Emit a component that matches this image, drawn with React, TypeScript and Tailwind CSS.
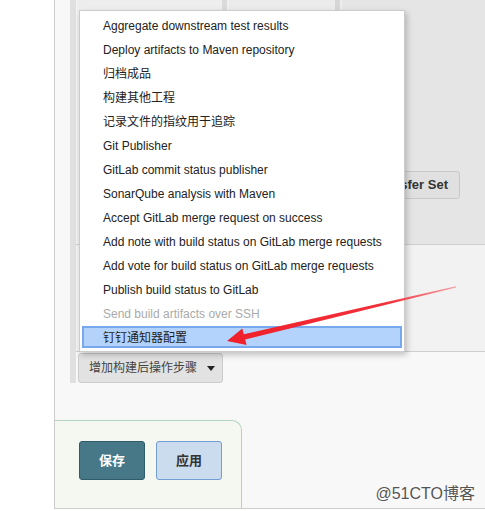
import React from "react";

const items: { label: string; disabled?: boolean; active?: boolean }[] = [
  { label: "Aggregate downstream test results" },
  { label: "Deploy artifacts to Maven repository" },
  { label: "归档成品" },
  { label: "构建其他工程" },
  { label: "记录文件的指纹用于追踪" },
  { label: "Git Publisher" },
  { label: "GitLab commit status publisher" },
  { label: "SonarQube analysis with Maven" },
  { label: "Accept GitLab merge request on success" },
  { label: "Add note with build status on GitLab merge requests" },
  { label: "Add vote for build status on GitLab merge requests" },
  { label: "Publish build status to GitLab" },
  { label: "Send build artifacts over SSH", disabled: true },
  { label: "钉钉通知器配置", active: true },
];

const font = "font-['Liberation_Sans','Noto_Sans_CJK_SC',sans-serif]";

export default function App() {
  return (
    <div className={`relative w-[485px] h-[511px] bg-white overflow-hidden flex ${font}`}>
      <div className="w-[54px] shrink-0 bg-white" />
      <div className="flex-1 h-[509px] border-l border-b border-[#cccccc] bg-[#f8f8f8] flex flex-col">
        {/* post-build section */}
        <div className="pl-[15px]">
          <div className="border-l-[6px] border-[#e0e0e0] h-[383px] flex flex-col">
            {/* block A */}
            <div className="h-[245px] border-b border-[#cfcfcf] flex bg-[#f2f2f2]">
              <div className="w-px bg-[#f3f3f3]" />
              <div className="w-[145px] bg-[#eeeeee]" />
              <div className="w-[5px] bg-[#dadada]" />
              <div className="w-[2px] bg-[#f0f0f0]" />
              <div className="w-[106px] bg-[#ebebeb]" />
              <div className="w-[5px] bg-[#d6d6d6]" />
              <div className="w-[2px] bg-[#ededed]" />
              <div className="flex-1 bg-[#e5e5e5] flex justify-end items-start pt-[171px] pr-[25px]">
                <div className="shrink-0 h-[28px] px-[11px] flex items-center rounded-[3px] border border-[#c9c9c9] bg-[#e0e0e0] text-[13px] font-bold text-[#333333] whitespace-nowrap">
                  Transfer Set
                </div>
              </div>
            </div>
            {/* block B */}
            <div className="h-[107px] border-b border-[#cfcfcf] bg-[#f2f2f2]" />
            {/* add button */}
            <div className="pt-px pl-[2px]">
              <div className="h-[30px] w-[145px] rounded-[3px] border border-[#cccccc] bg-[#e2e2e2] flex items-center pl-[10px] text-[12px] text-[#444444]">
                <span>增加构建后操作步骤</span>
                <span className="ml-[10px] w-0 h-0 border-l-[4px] border-r-[4px] border-t-[5px] border-l-transparent border-r-transparent border-t-[#222222]" />
              </div>
            </div>
          </div>
        </div>
        {/* bottom save panel */}
        <div className="mt-auto h-[88px] w-[187px] border-t border-r border-[#b3d4c2] rounded-tr-[10px] bg-[#f4f8f1] pl-[24px] pt-[20px] flex gap-[11px]">
          <div className="w-[66px] h-[39px] rounded-[3px] border border-[#2f5c6b] bg-[#467888] flex items-center justify-center text-white text-[13px] font-bold">
            保存
          </div>
          <div className="w-[66px] h-[39px] rounded-[3px] border border-[#739ed3] bg-[#cbdcee] flex items-center justify-center text-[#333333] text-[13px] font-bold">
            应用
          </div>
        </div>
      </div>

      {/* dropdown menu overlay */}
      <div className="absolute left-[79px] top-[10px] w-[326px] h-[342px] bg-white border border-[#cccccc] p-[2px] shadow-[2px_3px_6px_rgba(0,0,0,0.22)]">
        {items.map((it) => (
          <div key={it.label} className="h-[24px] py-px">
            <div
              className={`h-[22px] border-2 flex items-center pt-[2px] pl-[19px] text-[12px] whitespace-nowrap ${
                it.active
                  ? "border-[#76a8ee] bg-[#b3d3fc]"
                  : "border-transparent"
              } ${it.disabled ? "text-[#aaaaaa]" : "text-[#222222]"}`}
            >
              {it.label}
            </div>
          </div>
        ))}
      </div>

      {/* red annotation arrow */}
      <svg className="absolute left-0 top-0 pointer-events-none" width="485" height="511">
        <defs>
          <linearGradient id="ag" x1="227" y1="341" x2="456" y2="287" gradientUnits="userSpaceOnUse">
            <stop offset="0" stopColor="#f0202a" />
            <stop offset="0.7" stopColor="#f2303a" />
            <stop offset="1" stopColor="#f6a0a4" />
          </linearGradient>
        </defs>
        <polygon
          points="227,341 242.3,328.6 243.8,334.2 456,286.3 456,287.6 245.2,339.4 246.6,345"
          fill="url(#ag)"
        />
      </svg>

      {/* watermark */}
      <div className="absolute right-[10px] top-[482px] text-[16px] text-[#555555] [text-shadow:0_0_2px_#ffffff]">
        @51CTO博客
      </div>
    </div>
  );
}
